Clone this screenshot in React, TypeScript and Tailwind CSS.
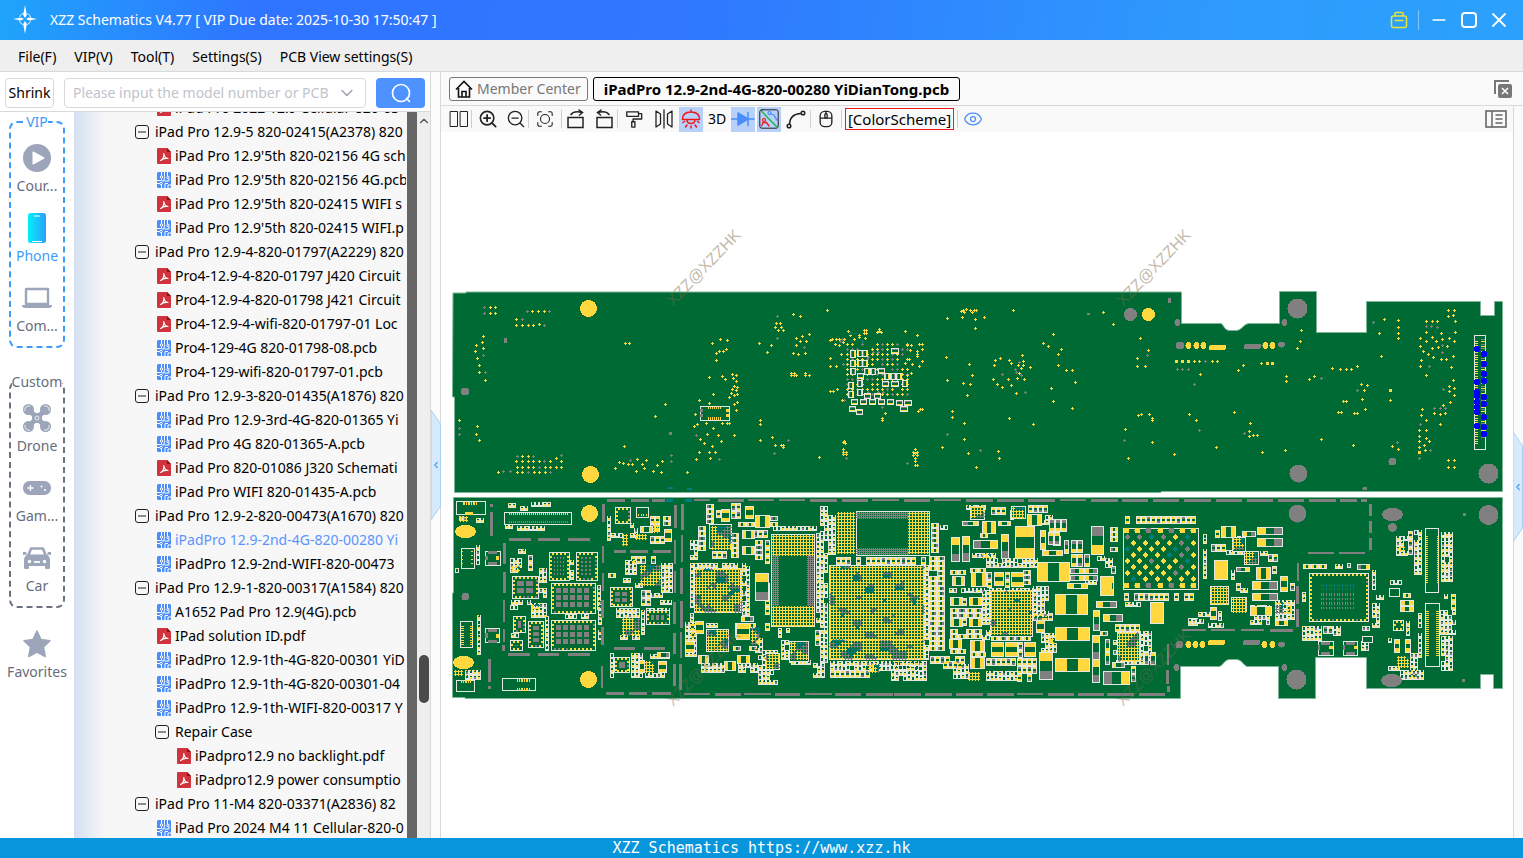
import type { ReactNode } from "react";
import clsx from "clsx";
import { ChevronDown, ChevronLeft, ChevronUp, Eye, Minus, Search, X } from "lucide-react";

/* ---------- library tree ---------- */

type RowKind = "group" | "pdf" | "pcb" | "subgroup" | "subpdf";

const rows: [RowKind, string][] = [
  ["pdf", "iPad Pro 2022 12.9 Cellular-820-03"],
  ["group", "iPad Pro 12.9-5 820-02415(A2378) 820"],
  ["pdf", "iPad Pro 12.9'5th 820-02156 4G sch"],
  ["pcb", "iPad Pro 12.9'5th 820-02156 4G.pcb"],
  ["pdf", "iPad Pro 12.9'5th 820-02415 WIFI s"],
  ["pcb", "iPad Pro 12.9'5th 820-02415 WIFI.p"],
  ["group", "iPad Pro 12.9-4-820-01797(A2229) 820"],
  ["pdf", "Pro4-12.9-4-820-01797 J420 Circuit"],
  ["pdf", "Pro4-12.9-4-820-01798 J421 Circuit"],
  ["pdf", "Pro4-12.9-4-wifi-820-01797-01 Loc"],
  ["pcb", "Pro4-129-4G 820-01798-08.pcb"],
  ["pcb", "Pro4-129-wifi-820-01797-01.pcb"],
  ["group", "iPad Pro 12.9-3-820-01435(A1876) 820"],
  ["pcb", "iPad Pro 12.9-3rd-4G-820-01365 Yi"],
  ["pcb", "iPad Pro 4G 820-01365-A.pcb"],
  ["pdf", "iPad Pro 820-01086 J320 Schemati"],
  ["pcb", "iPad Pro WIFI 820-01435-A.pcb"],
  ["group", "iPad Pro 12.9-2-820-00473(A1670) 820"],
  ["pcb", "iPadPro 12.9-2nd-4G-820-00280 Yi"],
  ["pcb", "iPadPro 12.9-2nd-WIFI-820-00473"],
  ["group", "iPad Pro 12.9-1-820-00317(A1584) 820"],
  ["pcb", "A1652 Pad Pro 12.9(4G).pcb"],
  ["pdf", "IPad solution ID.pdf"],
  ["pcb", "iPadPro 12.9-1th-4G-820-00301 YiD"],
  ["pcb", "iPadPro 12.9-1th-4G-820-00301-04"],
  ["pcb", "iPadPro 12.9-1th-WIFI-820-00317 Y"],
  ["subgroup", "Repair Case"],
  ["subpdf", "iPadpro12.9 no backlight.pdf"],
  ["subpdf", "iPadpro12.9 power consumptio"],
  ["group", "iPad Pro 11-M4 820-03371(A2836) 82"],
  ["pcb", "iPad Pro 2024 M4 11 Cellular-820-0"],
];
const selectedRow = 18;

const rowIndent: Record<RowKind, string> = {
  group: "pl-[61px] gap-1.5",
  pdf: "pl-[83px] gap-1",
  pcb: "pl-[83px] gap-1",
  subgroup: "pl-[81px] gap-1.5",
  subpdf: "pl-[103px] gap-1",
};

function PdfIcon() {
  return (
    <svg viewBox="0 0 14 16" className="h-4 w-3.5 shrink-0">
      <path d="M1 0h9l4 4v11a1 1 0 0 1-1 1H1a1 1 0 0 1-1-1V1a1 1 0 0 1 1-1z" fill="#d1333c" />
      <path d="M10 0v4h4z" fill="#8f1118" />
      <path d="M3.500 12.500C6 11.500 7 9 6.800 5.500c.3 3 1.700 4.700 4.200 5-3-.6-5 0-7.500 2z" fill="none" stroke="#fff" strokeWidth="1.200" strokeLinejoin="round" />
    </svg>
  );
}

function PcbIcon() {
  return (
    <svg viewBox="0 0 14 16" className="h-4 w-3.5 shrink-0">
      <rect width="14" height="16" rx="1.500" fill="#4a8df8" />
      <path d="M4.500 0v4M0 8.500h4.500V6.500M7.500 0v4.500L7 9H5M10.500 0v4M7.500 9h4.500V6.500M0 11.500h3M4.500 12.500V16M8 16v-4.500h3M11 16v-3h3" fill="none" stroke="#fff" strokeWidth="1" />
      <circle cx="4.500" cy="5" r="1.200" fill="#4a8df8" stroke="#fff" />
      <circle cx="4" cy="11.500" r="1.200" fill="#4a8df8" stroke="#fff" />
      <circle cx="11" cy="5.500" r="1.200" fill="#4a8df8" stroke="#fff" />
    </svg>
  );
}

function CollapseIcon() {
  return (
    <svg viewBox="0 0 14 14" className="size-3.5 shrink-0" fill="none" stroke="#222">
      <rect x=".5" y=".5" width="13" height="13" rx="2.500" />
      <path d="M3 7h8" />
    </svg>
  );
}

function Tree() {
  return (
    <div className="min-w-0 flex-1 overflow-hidden bg-gradient-to-r from-[#d5dff1] to-[#f7f7f7] to-[32px]">
      <ul className="-mt-4 mr-px">
        {rows.map(([kind, label], i) => (
          <li key={label}>
            <button className={clsx("flex h-6 w-full items-center overflow-hidden whitespace-nowrap text-left", rowIndent[kind], i === selectedRow && "text-[#5b93ff]")}>
              {kind === "group" || kind === "subgroup" ? <CollapseIcon /> : kind === "pcb" ? <PcbIcon /> : <PdfIcon />}
              <span>{label}</span>
            </button>
          </li>
        ))}
      </ul>
    </div>
  );
}

/* ---------- category rail ---------- */

const railIcons: Record<string, ReactNode> = {
  course: (
    <svg viewBox="0 0 28 28" className="size-7">
      <circle cx="14" cy="14" r="14" fill="#9ca5b9" />
      <path d="M9.500 8.200v11.600q0 1 1 .6l10.500-5.600q.8-.8 0-1.500L10.500 7.600q-1-.4-1 .6z" fill="#fff" />
    </svg>
  ),
  phone: (
    <svg viewBox="0 0 18 30" className="h-[30px] w-[18px]">
      <defs>
        <linearGradient id="phone">
          <stop stopColor="#02f0fc" />
          <stop offset="1" stopColor="#2c9ffb" />
        </linearGradient>
      </defs>
      <rect width="18" height="30" rx="2.500" fill="url(#phone)" />
      <path d="M6.500 3h5M4.500 28.500h9" stroke="#fff" strokeWidth="1.200" strokeLinecap="round" />
    </svg>
  ),
  computer: (
    <svg viewBox="0 0 30 22" className="h-[22px] w-[30px]">
      <path d="M4 2h22v15H4z" fill="#fff" stroke="#9ca5b9" strokeWidth="2.400" strokeLinejoin="round" />
      <path d="M0 18h30v1q-.5 2-3 2H3q-2.500 0-3-2z" fill="#9ca5b9" />
    </svg>
  ),
  drone: (
    <svg viewBox="0 0 28 28" className="size-7">
      <path d="M7 7l14 14M21 7L7 21" stroke="#9ca5b9" strokeWidth="5" />
      <rect x="9" y="9" width="10" height="10" rx="2" fill="#9ca5b9" />
      <circle cx="5.500" cy="5.500" r="5.500" fill="#9ca5b9" />
      <circle cx="22.500" cy="5.500" r="5.500" fill="#9ca5b9" />
      <circle cx="5.500" cy="22.500" r="5.500" fill="#9ca5b9" />
      <circle cx="22.500" cy="22.500" r="5.500" fill="#9ca5b9" />
      <g fill="none" stroke="#fff" strokeWidth=".8">
        <path d="M2 7A4 4 0 0 1 7 2M21 2a4 4 0 0 1 5 5M2 21a4 4 0 0 0 5 5M21 26a4 4 0 0 0 5-5" />
        <circle cx="14" cy="14" r="2" />
      </g>
    </svg>
  ),
  game: (
    <svg viewBox="0 0 28 14" className="h-3.5 w-7">
      <rect width="28" height="14" rx="6.500" fill="#9ca5b9" />
      <path d="M7.500 4v6M4.500 7h6" stroke="#fff" strokeWidth="1.300" />
      <circle cx="18.500" cy="5.500" r="1" fill="#fff" />
      <circle cx="22" cy="9" r="1" fill="#fff" />
    </svg>
  ),
  car: (
    <svg viewBox="0 0 28 22" className="h-[22px] w-7">
      <path d="M5.500 8L8 1.500h12L22.500 8" fill="none" stroke="#9ca5b9" strokeWidth="2.600" strokeLinejoin="round" />
      <path d="M4 7.500h20q3 2 3 6V21q0 1-1.500 1H23q-1 0-1-1v-2H6v2q0 1-1 1H2.500Q1 22 1 21v-7.500q0-4 3-6zM0 5h3l1 2.500L0 8zM28 5h-3l-1 2.500 4 .5z" fill="#9ca5b9" />
      <path d="M11 15h6" stroke="#fff" strokeWidth="1.800" />
      <circle cx="6.500" cy="14.500" r="1.700" fill="#fff" />
      <circle cx="21.500" cy="14.500" r="1.700" fill="#fff" />
    </svg>
  ),
  star: (
    <svg viewBox="0 0 28 28" className="size-7">
      <path d="M14 1l4 8.500 9 1.200-6.500 6.300 1.700 9.500L14 22l-8.200 4.500L7.500 17 1 10.700l9-1.200z" fill="#9ca5b9" stroke="#9ca5b9" strokeWidth="1.500" strokeLinejoin="round" />
    </svg>
  ),
};

function RailItem({ icon, label, active }: { icon: string; label: string; active?: boolean }) {
  return (
    <button className={clsx("flex h-[70px] w-full flex-col items-center gap-[3px] pt-[11px]", active ? "text-[#3d9cfa]" : "text-[#666d7c]")}>
      <span className="flex h-[30px] shrink-0 items-center">{railIcons[icon]}</span>
      <span className="leading-5">{label}</span>
    </button>
  );
}

function Rail() {
  return (
    <nav className="flex w-[74px] shrink-0 flex-col items-center bg-white">
      <fieldset className="h-[236px] w-14 rounded-lg border-2 border-dashed border-[#3d9cfa]">
        <legend className="mx-auto h-5 leading-5 text-[#3d9cfa]">VIP</legend>
        <div className="flex flex-col items-center">
          <RailItem icon="course" label="Cour..." />
          <RailItem icon="phone" label="Phone" active />
          <RailItem icon="computer" label="Com..." />
        </div>
      </fieldset>
      <fieldset className="mt-6 h-[236px] w-14 rounded-lg border-2 border-dashed border-[#6b7180]">
        <legend className="mx-auto h-5 leading-5 text-[#666d7c]">Custom</legend>
        <div className="flex flex-col items-center">
          <RailItem icon="drone" label="Drone" />
          <RailItem icon="game" label="Gam..." />
          <RailItem icon="car" label="Car" />
        </div>
      </fieldset>
      <div className="mt-2.5">
        <RailItem icon="star" label="Favorites" />
      </div>
    </nav>
  );
}

/* ---------- board drawing ---------- */

// Board data is kept in thirds of a pixel, each block relative to its own origin.
type Ink = "y" | "g" | "t" | "w" | "b" | "k";
const inkColor: Record<Ink, string> = { w: "#e3e8e3", k: "#006a35", g: "#808080", y: "#ffd83f", t: "#007d80", b: "#0000ff" };
const blank = (): Record<Ink, string> => ({ w: "", k: "", g: "", y: "", t: "", b: "" });
const layers = [blank()];
const nextLayer = () => layers.push(blank());

let seed = 7;
function rnd() {
  seed = (seed * 1664525 + 1013904223) >>> 0;
  return seed / 4294967296;
}

const box = (c: Ink, x: number, y: number, w: number, h: number) => {
  layers[layers.length - 1][c] += `M${x} ${y}h${w}v${h}h${-w}z`;
};
const cross = (c: Ink, x: number, y: number) => {
  box(c, x - 1, y, 3, 1);
  box(c, x, y - 1, 1, 3);
};
const frame = (x: number, y: number, w: number, h: number) => {
  box("w", x, y, w, h);
  box("k", x + 1, y + 1, w - 2, h - 2);
};
const nums = (s: string) => s.trim().split(/[\s,]+/).map(Number);

function block(ox: number, oy: number) {
  const X = (v: number) => ox + Math.floor(v / 3);
  const Y = (v: number) => oy + Math.floor(v / 3);
  const S = (v: number) => Math.max(1, Math.round(v / 3));

  // one part with a pad at either end, colours given start/end
  const part = (x: number, y: number, w: number, h: number, horiz: boolean, a: Ink, b: Ink) => {
    frame(x, y, w, h);
    if (horiz) {
      const p = Math.max(1, Math.floor((w - 2) / 3));
      box(a, x + 1, y + 1, p, h - 2);
      box(b, x + w - 1 - p, y + 1, p, h - 2);
    } else {
      const p = Math.max(1, Math.floor((h - 2) / 3));
      box(a, x + 1, y + 1, w - 2, p);
      box(b, x + 1, y + h - 1 - p, w - 2, p);
    }
  };

  return {
    dots(c: Ink, s: string) {
      const n = nums(s);
      for (let i = 0; i < n.length; i += 2) cross(c, X(n[i]), Y(n[i + 1]));
    },
    bars(c: Ink, s: string) {
      const n = nums(s);
      for (let i = 0; i < n.length; i += 4) box(c, X(n[i]), Y(n[i + 1]), S(n[i + 2]), S(n[i + 3]));
    },
    parts(s: string) {
      nextLayer();
      s.trim().split(",").forEach((t) => {
        const [x, y, w, h, k] = t.trim().split(" ");
        part(X(+x), Y(+y), S(+w), S(+h), k[0] === "h", k[1] as Ink, k[2] as Ink);
      });
    },
    frames(s: string) {
      nextLayer();
      const n = nums(s);
      for (let i = 0; i < n.length; i += 4) frame(X(n[i]), Y(n[i + 1]), S(n[i + 2]), S(n[i + 3]));
    },
    pins(c: Ink, x: number, y: number, n: number, dx: number, dy: number, w: number, h: number) {
      for (let i = 0; i < n; i++) box(c, X(x + i * dx), Y(y + i * dy), S(w), S(h));
    },
    // package with edge pads and a matrix of thermal pads
    ic(x: number, y: number, w: number, h: number, cols: number, rws: number, c: Ink = "g") {
      const [px, py, pw, ph] = [X(x), Y(y), S(w), S(h)];
      frame(px, py, pw, ph);
      for (let i = 3; i < pw - 3; i += 4) {
        box("y", px + i, py + 1, 2, 2);
        box(rnd() < 0.75 ? "y" : "g", px + i, py + ph - 3, 2, 2);
      }
      for (let i = 4; i < ph - 3; i += 4) {
        box("y", px + 1, py + i, 2, 2);
        box(rnd() < 0.75 ? "y" : "g", px + pw - 3, py + i, 2, 2);
      }
      if (!cols) return;
      const cw = Math.floor((pw - 8) / cols);
      const ch = Math.floor((ph - 8) / rws);
      for (let i = 0; i < cols; i++) for (let j = 0; j < rws; j++) box(c, px + 5 + i * cw, py + 5 + j * ch, Math.max(1, cw - 2), Math.max(1, ch - 2));
    },
    // ball grid, with patches of the other net colours
    grid(x: number, y: number, w: number, h: number, other = 0.2, main: Ink = "y", pitch = 3) {
      const [px, py, pw, ph] = [X(x), Y(y), S(w), S(h)];
      for (let j = 1; j < ph; j += pitch) {
        for (let i = 1; i < pw; i += pitch) {
          const patch = Math.sin((px + i) / 4.3) * Math.sin((py + j) / 3.7) + 0.6 * Math.sin((i - j) / 7) + rnd() * 0.5;
          const alt = other > 0 && patch > 1.4 - other * 2.2;
          cross(alt ? (Math.sin(i / 5) * Math.cos(j / 4) > 0.45 ? "t" : "g") : main, px + i, py + j);
        }
      }
    },
    // passives packed in columns or rows
    cluster(s: string) {
      s.trim().split(",").forEach((t) => {
        const [a, b, c, d, k] = t.trim().split(" ");
        const [x, y, w, h] = [X(+a), Y(+b), S(+c), S(+d)];
        const [cw, ch] = k === "v" ? [5, 8] : k === "h" ? [8, 5] : [4, 5];
        for (let j = 0; j + ch <= h + 2; j += ch) {
          for (let i = 0; i + cw <= w + 2; i += cw) {
            if (rnd() < 0.08) continue;
            const g: Ink = rnd() < 0.25 ? "g" : "y";
            if (k === "m") {
              const up = rnd() < 0.5;
              box("w", x + i, y + j, 4, 5);
              box("k", x + i + 1, y + j + (up ? 0 : 1), 2, 3);
              if (rnd() < 0.7) box(g, x + i + 1, y + j + 2, 2, 2);
              if (rnd() < 0.3) box("y", x + i, y + j, 2, 1);
            } else part(x + i, y + j, cw, ch, k === "h", g, rnd() < 0.25 ? "g" : "y");
          }
        }
      });
    },
  };
}

const topLeft = block(445, 280);
topLeft.dots(
  "y",
  `136 82,151 82,136 100,151 100,262 94,280 94,298 94,214 118,214 136,232 136,250 136,265 136,283 133,115 169,94 196,112 187,115 205,91 214,97 235,103 256,103 277,121 301,
  541 190,553 190,1045 103,1066 109,994 130,1006 130,1009 142,992 141,1000 151,1015 151,1054 175,1072 169,1093 163,1066 184,1084 184,1054 196,943 190,979 196,967 217,1045 220,1060 223,1081 220,
  802 190,826 178,847 181,814 220,823 214,835 214,844 208,814 241,793 292,832 289,841 298,862 283,874 286,865 295,874 304,868 319,877 322,862 328,874 331,859 340,868 346,877 343,853 352,805 343,
  763 361,793 370,877 367,868 373,874 391,661 373,631 409,751 403,757 433,748 439,784 430,832 430,847 430,853 430,805 445,787 463,820 466,868 466,766 478,778 490,829 484,802 499,763 517,793 517,811 517,754 538,796 535,
  1039 280,1048 280,1039 286,1048 286,1054 286,1081 280,1081 286,1093 286,945 420,946 433,946 481,982 472,991 496,1009 496,1015 496,1015 502,1123 532,
  43 421,97 439,94 463,103 481,538 499,511 565,523 547,535 550,550 553,562 553,577 538,592 553,604 541,598 565,574 574,625 574,637 556,652 544,649 577,727 577,
  232 529,250 529,334 535,214 544,232 544,250 544,265 544,283 544,316 544,349 544,217 562,232 562,250 562,265 562,301 562,316 562,334 562,349 562,217 577,232 577,268 577,283 577,301 577,160 578`,
);
topLeft.dots("g", "118 82,118 100,247 94,313 94,232 118,298 136,115 226,121 277,43 445,43 463,997 109,997 175,1078 202,1030 481,988 520,754 466,823 538,679 526,679 544,556 541,217 529,265 529,349 526,298 544,283 562,250 577,316 577,175 574,196 574");
topLeft.bars("g", "177 176 9 14,673 456 9 9");
topLeft.bars("t", "670 622 16 7,727 625 16 7");
topLeft.frames("765 378 90 45");
topLeft.pins("y", 789, 381, 7, 6, 0, 3, 7);
topLeft.pins("y", 789, 411, 7, 6, 0, 3, 8);
topLeft.bars("y", "843 387 9 9,843 402 9 9");
topLeft.bars("g", "765 387 9 9,765 402 9 9");

const topMid = block(820, 280);
topMid.dots(
  "y",
  `22 91,382 115,424 94,430 91,438 88,433 97,450 92,457 97,463 91,470 91,427 112,466 118,493 112,466 145,580 91,850 97,880 133,700 163,670 190,685 199,724 208,715 223,715 256,739 271,757 271,766 307,694 325,700 364,757 385,961 175,985 211,952 235,952 259,976 259,
  379 232,448 253,457 286,430 310,451 313,442 346,382 301,526 241,541 235,523 256,568 241,574 250,607 226,610 244,631 262,595 255,604 264,592 295,613 298,565 298,574 316,532 313,520 298,547 322,589 340,597 280,610 257,
  397 394,397 412,433 430,433 478,445 520,469 562,367 502,535 514,538 535,568 415,640 433,916 448,997 487,925 535,955 406,964 403,988 403,997 415,997 421,
  31 181,37 178,50 178,58 178,46 193,58 196,73 178,70 187,85 154,91 166,103 178,118 166,118 172,133 151,139 151,133 160,139 160,136 175,172 157,178 148,184 157,178 154,257 154,292 166,64 223,31 235,31 259,49 259,
  292 214,292 222,298 193,307 193,307 208,292 230,307 244,298 259,277 253,274 196,271 212,268 237,256 250,262 196,274 280,262 286,31 334,40 334,52 328,67 361,196 400,187 415,187 421,295 394,301 388,307 388,
  73 484,76 490,70 487,70 508,70 517,70 523,79 517,79 523,286 508,280 517,292 517,280 526,292 526,286 520,286 535,286 544,286 556,292 556`,
);
topMid.dots("g", "547 283,616 337,597 248,604 286,586 268,588 276,382 463,481 511,262 550,79 535,187 382,913 481,982 226,70 253,73 361,67 178,61 184");
// via field under the processor, on a 15 unit pitch
for (let j = 0; j < 11; j++) {
  for (let i = 0; i < 13; i++) {
    if (rnd() < 0.12) continue;
    topMid.dots((j < 2 ? rnd() < 0.6 : rnd() < 0.25) ? "g" : "y", `${82 + i * 15} ${193 + j * 15}`);
    if (i > 3 && i < 9 && rnd() < 0.3) topMid.dots("g", `${84 + i * 15} ${201 + j * 15}`);
  }
}
topMid.dots("t", "91 160,127 184");
topMid.bars("g", "801 99 9 6,1044 56 9 15");
topMid.parts(
  `90 210 18 24 hgy,111 210 18 20 hyg,128 210 18 20 hgy,213 204 24 18 vgy,90 240 18 20 hgy,111 240 18 20 hyg,128 240 18 20 hgy,90 265 18 22 hyg,133 265 18 22 hgy,150 265 18 22 hyg,174 264 21 18 vgy,111 280 21 18 vgy,
  84 306 18 20 hgy,111 300 18 20 hgy,84 333 18 20 hgy,111 327 18 20 hgy,192 279 18 20 hyy,210 279 18 20 hyg,230 279 18 20 hgy,186 303 21 18 vgy,213 303 24 18 vgy,246 300 18 20 hgy,132 340 21 17 vyg,162 340 21 17 vyg,
  93 357 21 18 vgy,120 357 21 18 vgy,147 357 21 18 vgy,174 357 21 18 vgy,201 357 21 18 vgy,228 360 21 18 vgy,252 360 24 18 vgy,87 378 21 18 vgy,108 388 21 17 vyg,240 378 24 18 vgy`,
);

const topRight = block(1160, 280);
topRight.dots(
  "y",
  `424 151,421 184,412 205,673 118,658 160,664 229,715 121,715 142,715 160,715 175,865 91,883 91,865 109,880 106,886 124,886 157,799 124,817 124,832 124,799 157,844 160,781 175,817 172,829 184,847 178,868 175,883 184,799 184,781 199,817 205,835 202,862 199,790 214,805 223,820 232,844 238,859 238,880 229,784 241,781 259,874 262,799 286,880 301,868 319,868 334,883 325,883 346,871 367,850 376,823 400,841 403,856 400,841 433,
  49 244,67 244,85 244,103 244,118 244,157 244,172 244,304 250,322 250,337 250,235 271,250 256,121 283,379 289,379 304,463 289,448 298,517 265,541 268,559 268,574 268,592 259,604 313,622 316,613 331,607 358,550 364,559 364,616 388,535 397,544 397,583 400,592 400,691 331,691 361,
  88 403,109 421,223 397,271 430,268 454,268 469,280 466,292 466,169 502,43 523,307 517,376 511,484 478,580 496,697 499,715 508,787 388,784 406,799 421,778 451,799 451,778 469,799 475,778 484,793 496,808 484,778 501,796 511,778 517,865 541,883 541,865 562,883 562`,
);
topRight.dots("g", "640 127,799 139,814 139,832 142,847 196,847 217,808 259,850 328,823 385,841 385,856 385,781 433,712 487,811 511,778 535,52 268,67 268,85 268,136 244,103 313,118 451,253 460,484 295,592 331");
topRight.bars("y", "688 327 8 9,775 513 8 9,82 241 8 8,64 241 8 8,46 241 8 8,319 247 8 8,334 247 8 8");
topRight.frames("942 165 36 345");
topRight.pins("y", 945, 183, 45, 0, 7, 9, 3);
topRight.pins("g", 963, 178, 22, 0, 14, 12, 3);
topRight.pins("y", 963, 185, 21, 0, 14, 12, 3);

const botLeft = block(445, 490);
botLeft.bars(
  "g",
  `486 27 54 9,558 27 54 9,621 27 39 9,747 27 48 6,819 27 78 9,909 27 78 6,1002 27 78 6,1095 27 45 9,135 42 9 9,135 66 9 72,174 159 9 63,174 246 9 63,174 330 6 66,174 417 6 39,171 465 9 18,129 507 9 69,129 588 9 9,
  192 144 66 9,279 144 66 9,369 144 66 9,189 489 66 9,279 489 63 9,369 489 66 9,471 42 9 54,471 168 6 50,471 249 6 54,468 330 9 54,468 411 9 54,468 528 6 66,507 180 36 9,555 180 54 9,624 180 54 9,507 471 63 9,597 471 63 9,
  483 606 54 9,552 606 54 9,621 606 57 9,687 45 9 69,687 150 6 72,687 243 6 66,684 336 9 66,684 429 9 63,684 522 9 66,708 42 9 78,708 135 6 81,705 234 9 78,705 333 9 81,705 426 6 78,702 522 9 78,717 609 78 6,810 609 78 9,897 609 81 6,990 609 75 9,1080 609 60 6`,
);
botLeft.bars("t", "663 27 21 9,720 27 21 9");
botLeft.cluster(
  `42 78 27 18 m,81 84 40 18 m,190 40 24 18 m,225 48 30 16 m,260 36 56 22 m,182 104 20 10 m,206 108 112 22 m,32 220 16 24 m,95 165 10 54 m,98 375 12 118 m,60 540 42 28 m,200 540 88 16 v,
  196 205 40 40 m,250 196 20 60 v,220 178 20 8 m,284 236 26 50 m,200 330 60 10 m,284 295 26 30 m,375 195 16 80 m,302 378 16 100 m,260 340 50 50 m,188 430 44 20 m,195 345 20 18 m,360 374 66 12 m,456 285 10 70 m,460 330 8 120 m,
  487 80 16 70 m,555 100 20 50 m,615 80 26 44 v,655 80 26 30 h,600 140 54 24 v,500 130 30 20 m,540 212 40 46 m,560 200 70 26 v,650 220 30 84 m,490 250 36 12 h,535 264 20 16 m,570 280 20 22 m,590 300 26 50 v,620 310 30 20 m,645 330 32 10 m,
  515 356 70 24 m,590 360 14 80 m,525 435 64 22 m,604 355 72 12 m,495 490 16 70 m,560 490 40 70 m,590 550 70 14 m,615 492 60 12 m,
  785 42 28 56 h,815 60 14 36 v,860 40 34 54 v,880 96 130 12 h,760 110 34 74 h,735 150 20 70 m,788 185 60 28 v,860 130 34 70 h,925 120 40 30 v,930 150 36 54 h,735 220 170 16 m,735 235 14 160 m,892 230 22 150 m,760 378 130 16 v,975 80 22 12 h,
  962 150 16 84 v,960 280 16 150 v,985 110 130 20 m,1115 130 20 270 m,722 398 30 100 m,735 400 20 54 v,785 400 30 20 m,870 400 14 60 m,865 470 70 14 h,770 520 70 24 m,880 520 60 24 m,910 400 30 14 h,930 430 20 60 m,940 480 60 100 m,1000 415 36 36 m,1010 450 24 60 m,1040 510 60 20 m,1110 420 28 44 v,1105 520 35 40 m,1020 490 20 30 m`,
);
botLeft.frames("33 34 90 43,178 66 203 38,48 175 41 64,120 183 47 44,46 394 40 82,120 415 44 46,34 570 58 35,172 565 103 40,574 51 40 32");
botLeft.bars("g", "130 183 28 9,130 216 28 9,120 199 10 12,130 418 28 9,130 450 28 9,120 430 10 14");
botLeft.bars("y", "155 198 10 12,154 432 9 12,62 66 24 9");
botLeft.pins("y", 54, 36, 9, 5, 0, 3, 8);
botLeft.pins("y", 192, 69, 30, 6, 0, 3, 6);
botLeft.pins("g", 192, 93, 30, 6, 0, 3, 6);
botLeft.pins("y", 75, 408, 9, 0, 7, 9, 3);
botLeft.pins("y", 48, 408, 9, 0, 7, 9, 3);
botLeft.pins("y", 218, 567, 8, 5, 0, 3, 8);
botLeft.pins("y", 218, 594, 8, 5, 0, 3, 8);
botLeft.pins("y", 50, 572, 6, 5, 0, 3, 8);
botLeft.pins("y", 580, 74, 4, 8, 0, 4, 6);
botLeft.pins("y", 50, 185, 4, 0, 12, 6, 4);
botLeft.pins("y", 80, 185, 4, 0, 12, 6, 4);
botLeft.ic(312, 186, 62, 88, 4, 5);
botLeft.ic(394, 186, 67, 88, 3, 5);
botLeft.ic(202, 258, 82, 68, 2, 2);
botLeft.ic(318, 279, 134, 92, 5, 3);
botLeft.ic(318, 390, 134, 92, 5, 3);
botLeft.ic(204, 378, 40, 50, 1, 1);
botLeft.ic(250, 393, 49, 80, 1, 3);
botLeft.ic(195, 450, 38, 32, 2, 1);
botLeft.ic(510, 51, 47, 50, 0, 0);
botLeft.ic(496, 291, 70, 61, 2, 2);
botLeft.ic(604, 362, 72, 45, 3, 1);
botLeft.ic(508, 502, 49, 48, 1, 1);
botLeft.grid(585, 226, 66, 66, 0.5);
botLeft.grid(533, 384, 54, 54, 0.4);
botLeft.grid(44, 80, 26, 16, 0);
botLeft.grid(28, 542, 26, 20, 0);
botLeft.grid(198, 230, 24, 22, 0.2);
botLeft.grid(258, 342, 26, 22, 0.5);
botLeft.grid(625, 95, 22, 32, 0);
botLeft.grid(570, 132, 34, 22, 0);
botLeft.grid(532, 132, 18, 34, 0);
botLeft.frames("792 104 68 76,748 234 142 136,980 134 132 280,785 418 70 70,1034 455 60 62,960 490 46 50");
botLeft.grid(798, 108, 62, 70, 0.5);
botLeft.grid(750, 236, 140, 132, 0.3);
botLeft.grid(788, 420, 66, 66, 0.25);
botLeft.grid(1036, 457, 54, 58, 0.6);
botLeft.grid(962, 492, 42, 46, 0.4);
botLeft.grid(918, 412, 30, 50, 0.7);
botLeft.grid(982, 136, 130, 60, 0);
botLeft.grid(982, 350, 130, 60, 0);
botLeft.grid(982, 196, 22, 152, 0, "g", 2);
botLeft.grid(1088, 196, 22, 152, 0, "g", 2);
botLeft.grid(600, 515, 30, 36, 0.4);
botLeft.parts(
  `585 108 38 22 hyy,657 117 24 38 vyy,636 486 40 18 hyg,582 512 18 38 vyy,639 514 28 36 vyy,828 57 26 38 vyy,900 50 26 38 vyy,930 75 46 38 hyy,892 120 38 26 hyy,892 168 38 26 hyy,930 249 41 84 vyg,873 399 41 50 vyy,888 378 40 17 hyg,752 395 28 40 vyy,722 453 30 36 vyy,760 495 34 28 hyy,837 513 36 30 hyy,876 495 38 28 hyy`,
);

const botMid = block(820, 490);
botMid.bars(
  "g",
  `0 27 51 9,66 27 78 9,156 27 81 6,252 27 78 9,342 27 81 6,438 27 81 9,531 27 81 9,624 27 81 9,720 27 78 6,813 27 81 9,906 27 78 9,999 27 78 9,1092 27 48 9,0 609 36 6,45 609 78 9,138 609 81 9,222 609 81 9,315 609 81 9,408 609 81 9,501 609 81 9,591 609 78 6,684 609 78 9,774 609 78 9,861 609 81 9,957 609 78 9,1086 417 54 6,1041 462 6 63,1038 540 9 42,1041 588 9 18`,
);
botMid.cluster(
  `2 50 22 100 m,24 75 24 120 m,2 190 26 330 m,48 203 265 24 v,335 100 24 90 h,362 105 20 20 m,328 200 54 290 h,316 226 14 284 m,30 515 280 26 m,30 540 116 26 v,215 515 104 66 m,330 498 100 26 v,400 522 46 50 m,370 515 60 24 v,
  388 294 250 10 m,390 240 60 12 h,450 236 50 12 h,390 354 100 28 h,390 418 100 28 h,390 478 60 14 h,452 488 60 10 h,487 300 26 150 m,502 246 14 44 v,556 246 14 44 v,500 206 150 28 m,610 240 30 50 h,640 288 50 110 m,640 370 65 30 v,665 430 44 54 m,428 324 16 28 v,428 386 16 28 v,
  500 504 88 26 v,500 544 90 30 m,592 504 56 70 v,515 440 130 14 h,595 456 14 44 v,440 45 60 16 m,515 52 40 22 v,570 60 14 34 m,625 45 54 20 v,665 76 30 30 m,480 130 40 12 h,458 190 70 20 m,915 78 12 22 v,948 80 176 22 v,870 112 26 76 h,832 198 20 14 m,855 204 20 26 m,875 230 14 24 v,
  912 310 216 24 v,915 338 50 12 m,840 425 40 12 h,885 402 80 24 v,960 425 30 90 m,880 450 14 50 m,890 510 80 14 m,935 530 14 50 v,1104 384 36 18 v,700 140 26 30 m,795 270 30 16 m`,
);
botMid.frames("108 64 222 134,27 227 287 286,510 300 130 140,909 114 227 185,893 426 70 90,452 48 44 42,575 50 44 40");
botMid.grid(52, 66, 58, 130, 0);
botMid.grid(264, 66, 64, 130, 0);
botMid.grid(108, 66, 156, 21, 0, "g", 2);
botMid.grid(108, 174, 156, 21, 0, "g", 2);
botMid.grid(28, 228, 284, 222, 0.16);
botMid.grid(28, 449, 284, 62, 0.4);
botMid.grid(512, 302, 128, 136, 0.1);
botMid.grid(895, 428, 66, 86, 0.35);
botMid.grid(452, 50, 44, 38, 0.3);
botMid.grid(577, 52, 40, 36, 0.1);
botMid.grid(444, 548, 32, 26, 0);
botMid.grid(146, 524, 36, 26, 0.5);
botMid.grid(684, 446, 22, 22, 0);
botMid.grid(486, 190, 24, 20, 0.2);
botMid.parts(
  `393 143 26 75 vyg,428 140 25 78 vyg,461 152 75 28 hgy,486 93 43 38 hyy,543 132 23 75 vyg,585 110 59 99 vyy,621 72 45 35 hyy,660 120 17 60 vyy,666 180 62 17 hyy,688 87 18 40 vgy,706 87 18 40 vgy,724 87 18 40 vgy,684 128 17 40 vyg,704 128 18 40 vyg,732 152 16 42 vgy,
  753 152 18 40 vgy,771 152 17 40 vgy,753 192 18 38 vyy,771 192 17 38 vyg,792 192 17 38 vgy,813 108 40 86 vgy,651 216 98 59 hyy,750 234 42 18 hgy,792 234 41 18 hyg,750 255 42 17 hgy,792 255 41 17 hyg,741 279 62 17 hyy,705 312 98 62 hyy,828 333 62 20 hyg,850 372 60 23 hyg,705 411 104 41 hyy,705 504 106 43 hyy,
  816 435 25 74 vyg,816 508 25 73 vyg,820 360 20 62 vyg,657 486 41 84 vyg,850 543 82 41 hgy,990 336 41 65 vyy,840 258 41 59 vyy,453 248 47 45 hyy,396 260 39 29 hyy,522 248 29 42 vyy,573 246 38 44 vyy,390 322 40 28 hyy,447 322 38 28 hyy,390 386 40 28 hyy,447 386 38 28 hyy,388 448 40 30 hyy,450 450 45 36 hyy,450 502 45 37 hyy,
  515 456 40 44 vyy,555 456 38 44 vyy,612 456 36 44 vyy,650 390 28 40 vyy,427 93 50 16 hgy,534 93 38 16 hyy,855 448 16 40 vgy,855 488 16 40 vyg,877 518 40 18 hyg,973 488 16 40 vyg,990 488 17 40 vyg`,
);
botMid.bars("y", "844 262 34 40,993 345 35 54,858 300 6 10");

const botRight = block(1160, 490);
botRight.bars(
  "g",
  `72 27 81 9,168 27 78 9,261 27 78 9,354 27 78 9,447 27 81 9,540 27 51 9,603 27 18 9,627 42 9 36,627 93 9 36,627 144 9 36,444 186 78 6,537 186 78 6,411 219 6 54,408 288 9 54,408 357 9 54,66 417 72 6,153 417 72 6,243 417 69 6,330 417 69 9,909 69 9 9,906 567 9 9`,
);
botRight.cluster(
  `130 117 16 150 m,165 120 14 22 v,155 162 38 22 v,232 140 10 20 m,200 180 60 12 m,325 192 32 22 v,300 185 20 18 m,215 240 10 36 m,228 280 14 40 v,240 295 24 20 m,336 228 10 26 v,390 280 14 26 v,427 306 8 36 m,115 368 34 20 m,150 352 18 36 v,84 388 50 14 m,145 400 44 10 m,176 365 14 30 m,270 345 60 60 m,
  430 222 80 12 h,525 222 20 10 m,562 220 12 10 m,638 226 14 90 m,650 315 20 20 m,636 340 20 80 m,595 410 40 20 m,428 408 60 40 m,490 410 30 30 v,520 410 28 30 m,605 455 22 32 m,744 125 10 70 v,710 140 30 54 m,762 120 20 130 m,718 196 12 30 v,845 128 36 155 m,690 270 30 16 m,730 310 30 18 h,775 370 14 130 m,842 362 46 80 m,
  845 440 40 100 m,875 312 16 48 v,852 312 12 10 m,686 445 14 12 m,740 395 14 50 m,720 540 70 24 m,750 490 20 70 m,345 330 60 54 m,685 530 30 12 m`,
);
botRight.frames("150 290 56 56,214 322 48 46,253 185 44 42,216 142 42 44,797 114 42 194,795 339 44 191,474 453 47 44,549 453 44 44,606 438 32 20,687 294 32 28");
botRight.grid(152, 292, 52, 52, 0);
botRight.grid(216, 324, 44, 44, 0);
botRight.grid(255, 187, 40, 38, 0.45);
botRight.grid(218, 144, 38, 40, 0.5);
botRight.grid(347, 338, 26, 34, 0.6);
botRight.grid(380, 345, 22, 26, 0.1);
botRight.grid(712, 500, 38, 38, 0.15);
botRight.grid(718, 168, 22, 22, 0.1);
botRight.ic(700, 392, 32, 34, 0, 0);
botRight.ic(447, 249, 180, 146, 0, 0);
for (let r = 0; r < 6; r++) botRight.pins(r < 2 ? "t" : "g", 483, 282 + r * 14, 13, 8, 0, 3, r % 2 ? 6 : 9);
botRight.pins("y", 798, 138, 24, 0, 6, 6, 3);
botRight.pins("y", 831, 138, 24, 0, 6, 6, 3);
botRight.pins("y", 798, 365, 23, 0, 6, 8, 3);
botRight.pins("y", 829, 365, 23, 0, 6, 8, 3);
botRight.bars("g", "484 456 26 8,484 486 26 8,474 465 7 16,558 456 26 8,558 486 26 8,550 465 7 16");
botRight.bars("y", "507 468 12 9,582 468 9 9");
botRight.parts(
  `183 108 44 35 hyy,246 125 41 17 hyg,291 111 78 24 hyg,291 144 78 26 hyg,162 210 41 60 vyy,228 231 42 16 hgy,288 231 44 38 hyy,276 273 78 27 hyg,276 309 78 24 hyg,270 348 65 30 hyy,362 258 24 48 vyy,345 390 40 17 hyy,591 222 38 17 hgy,720 330 42 18 hyy,720 350 42 18 hyy,702 447 18 42 vyy,735 447 18 42 vyy,150 352 20 38 vyy`,
);
botRight.bars("y", "165 213 36 40");

// diamond matrix of the large socket
const socket = { yellow: "", gray: "", teal: "" };
for (let r = 0; r < 8; r++) {
  for (let c = 0; c < 12; c++) {
    if ((r + c) % 2) continue;
    const x = 1127 + c * 6;
    const y = 537 + r * 6;
    const v = rnd();
    const d = `M${x} ${y - 3}l3 3l-3 3l-3-3z`;
    if (v < 0.62) socket.yellow += d;
    else if (v < 0.8) socket.gray += d;
    else socket.teal += d;
  }
}

const topOutline =
  "M453 293H466V292H1181.500V323.500H1221C1224 325 1224 330.500 1230 330.500H1236C1242 330.500 1243 324 1249 323.500H1279.500V291.500H1316.500V332.500H1366.500V301.500H1480.500V315.500H1494.500V301.500H1502.500V491.500H1161V492.500H454.500V397H452.500z";
const bottomOutline =
  "M453.500 497.500H1502.500V688.500H1493.500V674.500H1480.500V688.500H1366.500V657.500H1315.500V698.500H1278.500V666.500H1247C1243 665 1242 659.500 1236 659.500H1230C1224 659.500 1223 666 1219 666.500H1180.500V698.500H465V697.500H452.500V593H453.500z";

const holes: [string, number, number, number, number][] = [
  ["#ffd83f", 588.5, 308.5, 8.5, 8.5],
  ["#ffd83f", 590.5, 474.5, 8.5, 8.5],
  ["#808080", 465, 391.5, 4, 4],
  ["#808080", 1130.5, 314.5, 6.5, 6.5],
  ["#ffd83f", 1148.5, 314.5, 6.5, 6.5],
  ["#808080", 1177.5, 322.5, 3, 3.5],
  ["#808080", 1284.5, 322.5, 3, 3.5],
  ["#808080", 1297.5, 308.5, 10, 10],
  ["#808080", 1180, 345.5, 4, 4],
  ["#ffd83f", 1188.5, 345.5, 3, 3.5],
  ["#ffd83f", 1196.5, 345.5, 3, 3.5],
  ["#ffd83f", 1203.5, 345.5, 3, 3.5],
  ["#ffd83f", 1265.5, 345.5, 3, 3.5],
  ["#ffd83f", 1272.5, 345.5, 3, 3.5],
  ["#808080", 1281.5, 344.5, 3.5, 3],
  ["#808080", 1298.5, 473.5, 9, 9],
  ["#808080", 1392.5, 461.5, 4, 4],
  ["#808080", 1488.5, 473.5, 10, 10],
  ["#808080", 1365, 488.5, 2.5, 1.5],
  ["#ffd83f", 589.5, 513.5, 8.5, 8.5],
  ["#ffd83f", 588.5, 679.5, 8.5, 8.5],
  ["#ffd83f", 465.5, 531.5, 10.5, 6.5],
  ["#ffd83f", 463.5, 662.5, 10.5, 6.5],
  ["#808080", 465.5, 596.5, 4, 4],
  ["#808080", 1297.5, 513.5, 9, 9],
  ["#808080", 1392.5, 514.5, 10.5, 6.5],
  ["#808080", 1392.5, 527.5, 4.5, 4.5],
  ["#808080", 1488.5, 515, 10, 10],
  ["#808080", 1391.5, 680.5, 10.5, 6.5],
  ["#808080", 1296.5, 679.5, 10, 10],
  ["#808080", 1179.5, 644.5, 4, 4],
  ["#ffd83f", 1188.5, 644.5, 3, 3.5],
  ["#ffd83f", 1195.5, 644.5, 3, 3.5],
  ["#ffd83f", 1202.5, 644.5, 3, 3.5],
  ["#ffd83f", 1264.5, 644.5, 3, 3.5],
  ["#ffd83f", 1272.5, 644.5, 3, 3.5],
  ["#808080", 1281.5, 644.5, 3.5, 3],
  ["#808080", 1176.5, 667.5, 3, 3.5],
  ["#808080", 1284.5, 667.5, 3, 3.5],
];

const bluePads = [
  [1477, 349], [1477, 382], [1477, 392], [1477, 396], [1477, 402], [1477, 407], [1477, 412], [1477, 426],
  [1484, 354], [1484, 364], [1484, 374], [1484, 381], [1484, 397], [1484, 404], [1484, 417], [1484, 427], [1484, 434],
];

const order: Ink[] = ["w", "k", "g", "y", "t", "b"];

function BoardView() {
  return (
    <svg viewBox="441 132 1072 706" className="size-full" aria-label="Board layout">
      <g fill="#006a35" stroke="#7db597">
        <path d={topOutline} />
        <path d={bottomOutline} />
      </g>
      <g shapeRendering="crispEdges">
        {layers.map((ink, i) => (
          <g key={i}>{order.map((c) => ink[c] && <path key={c} d={ink[c]} fill={inkColor[c]} />)}</g>
        ))}
        {holes.map(([fill, cx, cy, rx, ry], i) => (
          <ellipse key={i} fill={fill} cx={cx} cy={cy} rx={rx} ry={ry} />
        ))}
        <rect x="1209" y="345" width="17" height="5" rx="2" fill="#ffd83f" />
        <rect x="1244" y="344" width="17" height="5" rx="2" fill="#808080" />
        <rect x="1208" y="640" width="17" height="5" rx="2" fill="#ffd83f" />
        <rect x="1243" y="640" width="17" height="5" rx="2" fill="#808080" />
        {bluePads.map(([x, y]) => (
          <circle key={`${x}-${y}`} cx={x} cy={y} r="3" fill="#0000ff" />
        ))}
        <path d={socket.yellow} fill="#ffd83f" />
        <path d={socket.gray} fill="#808080" />
        <path d={socket.teal} fill="#007d80" />
        {[1126, 1137, 1148, 1160, 1171, 1182, 1193].map((x, i) => (
          <g key={x} fill={i === 2 || i === 4 ? "#808080" : "#ffd83f"}>
            <circle cx={x + 0.5} cy="530.500" r="3" />
            <circle cx={x + 0.5} cy="585.500" r="3" />
          </g>
        ))}
      </g>
      <g fill="#7a6a48" fontFamily="Liberation Sans, sans-serif" fontSize="16">
        <text opacity=".45" transform="translate(673 307) rotate(-46)">XZZ@XZZHK</text>
        <text opacity=".45" transform="translate(1123 307) rotate(-46)">XZZ@XZZHK</text>
        <text opacity=".4" transform="translate(673 707) rotate(-46)">XZZ@XZZHK</text>
        <text opacity=".4" transform="translate(1123 707) rotate(-46)">XZZ@XZZHK</text>
      </g>
    </svg>
  );
}

/* ---------- toolbar ---------- */

function Glyph({ children, className = "size-[18px]", box = "0 0 20 20" }: { children: ReactNode; className?: string; box?: string }) {
  return (
    <svg viewBox={box} className={clsx("shrink-0", className)} fill="none" stroke="#222" strokeWidth="1.500" strokeLinecap="round" strokeLinejoin="round">
      {children}
    </svg>
  );
}

function Tool({ label, on, width = "w-[27px]", children }: { label: string; on?: boolean; width?: string; children: ReactNode }) {
  return (
    <button aria-label={label} className={clsx("flex h-[25px] items-center justify-center", width, on && "bg-[#b7d1fb]")}>
      {children}
    </button>
  );
}

const Sep = () => <span className="h-[18px] w-px shrink-0 bg-[#cfcfcf]" />;

function Toolbar() {
  return (
    <div className="flex h-[26px] items-center bg-[#f9f9f9] pl-1.5">
      <Tool label="Split view" width="w-6">
        <Glyph className="h-[18px] w-5" box="0 0 20 18">
          <path strokeWidth="1" strokeLinejoin="miter" d="M1.500 1.500h7v15h-7zM11.500 1.500h7v15h-7z" />
        </Glyph>
      </Tool>
      <Sep />
      <Tool label="Zoom in" width="w-8">
        <Glyph>
          <circle cx="9" cy="9" r="7.500" strokeWidth="1.800" />
          <path strokeWidth="2" d="M14.500 14.500l4 4M9 5.500v7M5.500 9h7" />
        </Glyph>
      </Tool>
      <Tool label="Zoom out" width="w-6">
        <Glyph>
          <circle cx="9" cy="9" r="7.500" />
          <path d="M14.500 14.500l4 4M5.500 9h7" />
        </Glyph>
      </Tool>
      <Sep />
      <Tool label="Fit" width="w-8">
        <Glyph>
          <circle cx="10" cy="10" r="5" strokeWidth="1.200" />
          <path strokeWidth="1.200" d="M2 6V4q0-2 2-2h2M14 2h2q2 0 2 2v2M18 14v2q0 2-2 2h-2M6 18H4q-2 0-2-2v-2" />
        </Glyph>
      </Tool>
      <Sep />
      <Tool label="Rotate right" width="w-7">
        <Glyph className="size-5">
          <path strokeLinejoin="miter" d="M2 8.500h15v10H2zM5 5.500q3-4 11-2M13 1l3.500 2.500-3 2.500" />
        </Glyph>
      </Tool>
      <Tool label="Rotate left">
        <Glyph className="size-5">
          <path strokeLinejoin="miter" d="M3 8.500h15v10H3zM15 5.500q-3-4-11-2M7 1L3.500 3.500l3 2.500" />
        </Glyph>
      </Tool>
      <Sep />
      <Tool label="Paint" width="w-[31px]">
        <Glyph>
          <path d="M2 2h13v5H2zM15 4h3.500v6H9v3M7.500 13h3.500v6H7.500z" />
        </Glyph>
      </Tool>
      <Tool label="Mirror" width="w-[30px]">
        <Glyph className="size-5">
          <path strokeWidth="1.300" d="M10 1v18M2 2v16l4.500-3V5zM18 2v16l-4.500-3V5z" />
        </Glyph>
      </Tool>
      <Tool label="Lamp" on width="w-6">
        <Glyph className="size-5">
          <g stroke="#f01818">
            <path d="M1.500 10.500q0-7.500 8.500-7.500t8.500 7.500zM10 1v2M6 10.500q0 4 4 4t4-4M2 13.500l1.500-1M18 13.500l-1.500-1M4.500 18l1.500-2M15.500 18L14 16M10 17v2" />
          </g>
        </Glyph>
      </Tool>
      <Tool label="3D" width="w-7">
        3D
      </Tool>
      <Tool label="Diode" on width="w-6">
        <Glyph className="h-4 w-6" box="0 0 24 16">
          <path d="M0 8h23M17 1.500v13" stroke="#4a8df8" />
          <path d="M7 2l10 6-10 6z" fill="#4a8df8" stroke="#4a8df8" />
        </Glyph>
      </Tool>
      <span className="w-0.5" />
      <Tool label="Nets" on width="w-6">
        <Glyph className="size-5">
          <rect x=".8" y=".8" width="18.400" height="18.400" rx="2" strokeWidth="1" />
          <path d="M3 2.500l4.500 5L18 18" stroke="#29b34b" strokeWidth="1.500" />
          <path d="M12 5l3 1 1.500 3L18 11" stroke="#4a8df8" strokeWidth="1.300" />
          <path d="M2.500 17l1.500-3.500h3.500L10 17" stroke="#f01818" strokeWidth="1.300" />
          <circle cx="10.500" cy="4" r="1.500" stroke="#4a8df8" strokeWidth="1.200" />
          <circle cx="5" cy="11" r="1.500" stroke="#f01818" strokeWidth="1.200" />
        </Glyph>
      </Tool>
      <Tool label="Curve" width="w-[29px]">
        <Glyph className="size-5">
          <path d="M3.500 15Q4 5 15 4.500" />
          <circle cx="3" cy="17" r="1.800" />
          <circle cx="17" cy="4" r="1.800" />
        </Glyph>
      </Tool>
      <Sep />
      <Tool label="Mouse" width="w-[30px]">
        <Glyph>
          <rect x="3.500" y="1.500" width="13" height="17" rx="5" />
          <path d="M4 9h12M10 2v2" />
          <rect x="8.700" y="4" width="2.600" height="5" rx="1.300" />
        </Glyph>
      </Tool>
      <Sep />
      <button className="mx-[3px] h-[22px] w-[109px] border border-[#f01818] text-[15px] leading-5">[ColorScheme]</button>
      <Sep />
      <Tool label="Show" width="w-[30px]">
        <Eye className="size-5 text-[#4a8df8]" strokeWidth={1.5} />
      </Tool>
      <button aria-label="Side panel" className="ml-auto mr-1.5">
        <svg viewBox="0 0 22 18" className="h-[18px] w-[22px]" fill="none" stroke="#666">
          <rect x="1" y="1" width="20" height="16" strokeWidth="1.600" />
          <path d="M7 1v16" strokeWidth="1.500" />
          <path d="M10.500 5h7M10.500 9h7M10.500 13h7" strokeWidth="1.500" />
        </svg>
      </button>
    </div>
  );
}

/* ---------- frame ---------- */

function TitleBar() {
  return (
    <header className="flex h-10 shrink-0 items-center bg-[linear-gradient(100deg,#1fa4fb_0%,#2f74ff_17%,#2f78ff_45%,#2e9bfd_80%,#2ba1fc_100%)] px-3 text-white">
      <svg viewBox="0 0 26 30" className="h-[30px] w-[26px]">
        <circle cx="13" cy="14" r="6" fill="none" stroke="#fff" strokeWidth="1" strokeDasharray="6 3.400" strokeDashoffset="-1.700" opacity=".8" />
        <path d="M13 0l1.800 10-1.800 3-1.800-3zM13 29l1.800-10-1.800-3-1.800 3zM1 14l8-1.600 3 1.600-3 1.600zM25 14l-8-1.600-3 1.600 3 1.600z" fill="#fff" />
      </svg>
      <h1 className="ml-3">XZZ Schematics V4.77 [ VIP Due date: 2025-10-30 17:50:47 ]</h1>
      <div className="ml-auto flex items-center">
        <button aria-label="License">
          <svg viewBox="0 0 18 18" className="size-[18px]" fill="none" stroke="#e8e337" strokeWidth="1.500">
            <rect x="1.500" y="5" width="15" height="11.500" rx="2" />
            <path d="M5 5V2.500q0-1 1-1h6q1 0 1 1V5M4.500 9.500h9" />
          </svg>
        </button>
        <span className="mx-2.5 h-5 w-px bg-white/40" />
        <button aria-label="Minimize">
          <Minus className="size-5" strokeWidth={2} />
        </button>
        <button aria-label="Maximize" className="ml-3">
          <span className="block size-4 rounded border-2 border-white" />
        </button>
        <button aria-label="Close" className="ml-2.5">
          <X className="size-6" strokeWidth={1.8} />
        </button>
      </div>
    </header>
  );
}

function Handle({ className }: { className: string }) {
  return (
    <button aria-label="Collapse" className={clsx("absolute flex h-[110px] w-2.5 items-center justify-center text-[#4ba3ec]", className)}>
      <svg viewBox="0 0 10 110" preserveAspectRatio="none" className="absolute inset-0 size-full">
        <path d="M0 0L9.500 14V96L0 110z" fill="#d7eafd" stroke="#a8d2f6" />
      </svg>
      <ChevronLeft className="relative size-2.5" strokeWidth={3} />
    </button>
  );
}

export default function App() {
  return (
    <div className="flex h-screen flex-col overflow-hidden bg-white font-['Noto_Sans',sans-serif] text-sm text-black">
      <TitleBar />
      <nav className="flex h-8 shrink-0 items-center gap-[18px] border-b border-[#d9d9d9] bg-[#efefef] px-[18px] pt-0.5">
        {["File(F)", "VIP(V)", "Tool(T)", "Settings(S)", "PCB View settings(S)"].map((m) => (
          <button key={m}>{m}</button>
        ))}
      </nav>

      <main className="flex min-h-0 flex-1">
        <aside className="flex w-[431px] shrink-0 flex-col border-r border-[#d9d9d9]">
          <form className="flex h-10 shrink-0 items-center border-b border-[#d9d9d9] pl-[5px] pt-0.5">
            <button type="button" className="h-[30px] w-[49px] rounded border border-[#d9d9d9]">
              Shrink
            </button>
            <div className="ml-2.5 flex h-[30px] w-[302px] items-center rounded border border-[#d9d9d9] px-2">
              <input aria-label="Model number" placeholder="Please input the model number or PCB" className="w-[264px] outline-none placeholder:text-[#bfc4cc]" />
              <ChevronDown className="ml-0.5 size-5 text-[#9aa0a8]" strokeWidth={1.6} />
            </div>
            <button aria-label="Search" className="ml-2.5 flex h-[30px] w-[49px] items-center justify-center rounded bg-[#4d92ff] text-white">
              <svg viewBox="0 0 20 20" className="size-5" fill="none" stroke="currentColor" strokeWidth="1.700" strokeLinecap="round">
                <circle cx="10" cy="10" r="8.500" />
                <path d="M15.500 15.500l3 3" />
              </svg>
            </button>
          </form>
          <div className="flex min-h-0 flex-1">
            <Rail />
            <Tree />
            <div className="w-2.5 bg-[#666]" />
            <div className="flex w-[13px] flex-col items-center bg-[#eee] pt-0.5">
              <ChevronUp className="size-3.5 shrink-0 text-[#555]" strokeWidth={2} />
              <div className="mt-[527px] h-12 w-2.5 rounded-full bg-[#4a4a4a]" />
            </div>
          </div>
        </aside>
        <div className="relative w-[10px] shrink-0 border-r border-[#d9d9d9] bg-[#fafdf9]">
          <Handle className="left-0 top-[338px]" />
        </div>

        <section className="flex min-w-0 flex-1 flex-col">
          <div className="flex h-[34px] shrink-0 items-center gap-[5px] border-b border-[#d9d9d9] bg-[#fafafa] pl-2">
            <button className="flex h-6 w-[139px] items-center gap-1 rounded-[3px] border border-[#777] px-[5px] text-[#777]">
              <svg viewBox="0 0 18 18" className="size-[18px] shrink-0" fill="none" stroke="#111" strokeWidth="1.600">
                <path d="M1 9.500L9 1.500l8 8M3.500 8v9h11V8M7 17v-5.500h4V17" />
              </svg>
              <span className="whitespace-nowrap">Member Center</span>
            </button>
            <button className="h-6 w-[367px] whitespace-nowrap rounded-[3px] border border-black text-[15px] leading-5 font-bold">iPadPro 12.9-2nd-4G-820-00280 YiDianTong.pcb</button>
            <button aria-label="Close all tabs" className="ml-auto mr-[11px]">
              <svg viewBox="0 0 18 18" className="size-[18px]">
                <path d="M1 14V1h14" fill="none" stroke="#777" strokeWidth="2" />
                <rect x="4" y="4" width="14" height="14" rx="2" fill="#777" />
                <path d="M8 8l6 6M14 8l-6 6" stroke="#fff" strokeWidth="1.500" />
              </svg>
            </button>
          </div>
          <div className="flex min-h-0 flex-1">
            <div className="flex min-w-0 flex-1 flex-col">
              <Toolbar />
              <div className="min-h-0 flex-1">
                <BoardView />
              </div>
            </div>
            <div className="relative w-2.5 shrink-0 border-l border-[#d9d9d9] bg-[#fafafa]">
              <Handle className="right-0 top-[326px]" />
            </div>
          </div>
        </section>
      </main>

      <footer className="h-5 shrink-0 bg-[#0795dc] text-center font-['DejaVu_Sans_Mono',monospace] text-[15px] leading-5 text-white">XZZ Schematics https://www.xzz.hk</footer>
    </div>
  );
}
